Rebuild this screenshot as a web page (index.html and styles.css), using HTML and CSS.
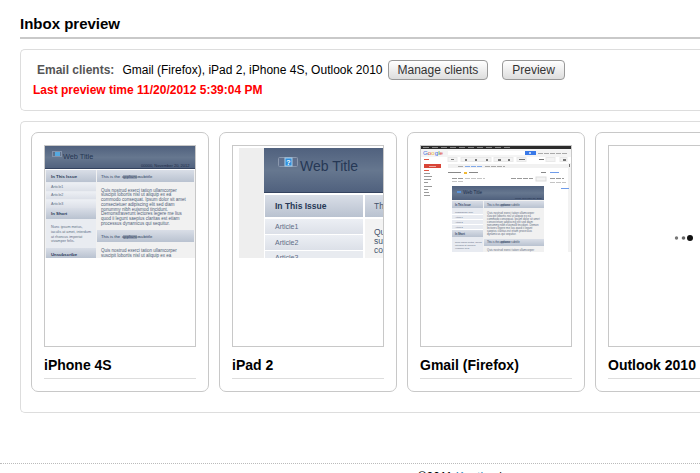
FILE: index.html
```html
<!DOCTYPE html>
<html lang="en">
<head>
<meta charset="utf-8">
<title>Inbox preview</title>
<link rel="stylesheet" href="styles.css">
</head>
<body>
<svg class="defs" aria-hidden="true">
  <defs>
    <linearGradient id="banner" x1="0" y1="0" x2="0" y2="1"><stop offset="0" stop-color="#50617e"/><stop offset=".5" stop-color="#66778f"/><stop offset="1" stop-color="#4f607d"/></linearGradient>
    <linearGradient id="bar" x1="0" y1="0" x2="0" y2="1"><stop offset="0" stop-color="#d9dee7"/><stop offset="1" stop-color="#b9c2d0"/></linearGradient>
    <linearGradient id="item" x1="0" y1="0" x2="0" y2="1"><stop offset="0" stop-color="#eceff4"/><stop offset="1" stop-color="#dce0e8"/></linearGradient>
  </defs>
</svg>
<main class="page">
  <h1>Inbox preview</h1>
  <section class="panel clients">
    <div class="clients-row">
      <span class="label">Email clients:</span>
      <span class="names">Gmail (Firefox), iPad 2, iPhone 4S, Outlook 2010</span>
      <button type="button">Manage clients</button>
      <button type="button" class="preview">Preview</button>
    </div>
    <p class="status">Last preview time 11/20/2012 5:39:04 PM</p>
  </section>
  <section class="panel cards">
    <article class="card">
      <div class="frame">
        <svg class="thumb" viewBox="0 0 150 200" role="img" aria-label="iPhone 4S preview">
          <rect y="0" width="150" height="112" fill="#f1f1f1"/>
          <rect width="150" height="23" fill="url(#banner)"/>
          <rect y="22" width="150" height="1" fill="#34435f"/>
          <rect y="23" width="150" height="1" fill="#fff"/>
          <rect x="7.500" y="5.500" width="9" height="5" fill="none" stroke="#8492aa"/>
          <rect x="10" y="6" width="5" height="4" fill="#55a9e0"/>
          <text x="18" y="13" font-size="7.300" fill="#243653">Web Title</text>
          <text x="96" y="21" font-size="4" fill="#1d2c47">00000, November 20, 2012</text>
          <rect x="1" y="24" width="50" height="88" fill="#e9ecf1"/>
          <rect x="1" y="24" width="50" height="12" fill="url(#bar)"/>
          <rect x="52" y="24" width="97" height="12" fill="url(#bar)"/>
          <rect x="1" y="37" width="50" height="8" fill="url(#item)"/>
          <rect x="1" y="46" width="50" height="7" fill="url(#item)"/>
          <rect x="1" y="54" width="50" height="8" fill="url(#item)"/>
          <rect x="1" y="62" width="50" height="11" fill="url(#bar)"/>
          <rect x="1" y="102" width="50" height="10" fill="url(#bar)"/>
          <rect x="52" y="84" width="97" height="12" fill="url(#bar)"/>
          <g font-size="4.300" font-weight="700" fill="#283a58">
            <text x="6" y="32">In This Issue</text><text x="6" y="69">In Short</text><text x="6" y="110">Unsubscribe</text>
          </g>
          <g font-size="3.700" fill="#5f6d85">
            <text x="6" y="42">Article1</text><text x="6" y="50">Article2</text><text x="6" y="59">Article3</text>
            <text x="6" y="82">Nunc ipsum metus,</text><text x="6" y="87">iaculis at amet, interdum</text><text x="6" y="92">at rhoncus imperiat</text><text x="6" y="96">vivamper felis.</text>
          </g>
          <g font-size="4.200" fill="#2d3f5d">
            <rect x="78" y="29" width="14" height="4" fill="#98a3b5"/><rect x="78" y="89" width="14" height="4" fill="#98a3b5"/>
            <text x="56" y="32">This is the</text><text x="56" y="92">This is the</text><text x="77" y="32">appliance</text><text x="77" y="92">appliance</text><text x="94" y="32">subtitle</text><text x="94" y="92">subtitle</text>
          </g>
          <g font-size="4.500" fill="#4e5d77">
            <text x="56" y="46">Quis nostrud exerci tation ullamcorper</text><text x="56" y="50">suscipit lobortis nisl ut aliquip ex ea</text><text x="56" y="55">commodo consequat. Ipsum dolor sit amet</text><text x="56" y="60">consectetuer adipiscing elit sed diam</text><text x="56" y="65">nonummy nibh euismod tincidunt.</text><text x="56" y="69">Demonstraverunt lectores legere me lius</text><text x="56" y="74">quod ii legunt saepius claritas est etiam</text><text x="56" y="79">processus dynamicus qui sequitur.</text><text x="56" y="106">Quis nostrud exerci tation ullamcorper</text><text x="56" y="111">suscipit lobortis nisl ut aliquip ex ea</text>
          </g>
          <rect y="112" width="150" height="4" fill="#fff"/>
        </svg>
      </div>
      <h2>iPhone 4S</h2>
    </article>
    <article class="card">
      <div class="frame">
        <svg class="thumb" viewBox="0 0 150 200" role="img" aria-label="iPad 2 preview">
          <svg x="6" y="2" width="144" height="110" viewBox="6 2 144 110">
            <rect x="6" y="2" width="144" height="110" fill="#eee"/>
            <rect x="31" y="2" width="119" height="110" fill="#fff"/>
            <rect x="31" y="2" width="119" height="45" fill="url(#banner)"/>
            <rect x="31" y="46" width="119" height="1" fill="#34435f"/>
            <rect x="46" y="11" width="19" height="10" fill="#60708d"/>
            <rect x="45.500" y="11.500" width="19" height="9" rx="1" fill="none" stroke="#8b98ad"/>
            <rect x="52" y="12" width="7" height="8" fill="#2f8fdc" stroke="#a9cfec"/>
            <text x="55.500" y="18.500" text-anchor="middle" font-size="7" font-weight="700" fill="#fff">?</text>
            <text x="67" y="25" font-size="14" fill="#263855">Web Title</text>
            <rect x="32" y="49" width="98" height="22" fill="url(#bar)"/>
            <rect x="132" y="49" width="18" height="22" fill="url(#bar)"/>
            <rect x="32" y="73" width="98" height="15" fill="url(#item)"/>
            <rect x="32" y="89" width="98" height="15" fill="url(#item)"/>
            <rect x="32" y="105" width="98" height="7" fill="#e8ebf0"/>
            <rect x="132" y="73" width="18" height="39" fill="#f3f3f3"/>
            <text x="42" y="63" font-size="8.500" font-weight="700" fill="#263855">In This Issue</text>
            <g font-size="7" fill="#5d6c86"><text x="42" y="83">Article1</text><text x="42" y="99">Article2</text><text x="42" y="114">Article3</text></g>
            <g font-size="8.500" fill="#45546d"><text x="141" y="63">Th</text><text x="141" y="89">Qu</text><text x="141" y="98">su</text><text x="141" y="107">co</text></g>
          </svg>
        </svg>
      </div>
      <h2>iPad 2</h2>
    </article>
    <article class="card">
      <div class="frame">
        <svg class="thumb" viewBox="0 0 150 200" role="img" aria-label="Gmail (Firefox) preview">
          <rect width="150" height="3" fill="#2c2c2c"/>
          <path d="M2 1.500h87" stroke="#888" stroke-dasharray="6 3"/>
          <rect y="3" width="150" height="8" fill="#f4f4f4"/>
          <rect x="27" y="5" width="77" height="4" fill="#fff"/>
          <text x="2" y="9" font-size="6.200"><tspan fill="#3c6fe0">G</tspan><tspan fill="#db4738">o</tspan><tspan fill="#edb82f">o</tspan><tspan fill="#3c6fe0">g</tspan><tspan fill="#3d9c4b">l</tspan><tspan fill="#db4738">e</tspan></text>
          <rect x="104" y="5" width="11" height="4" fill="#3979e8"/><rect x="108" y="6" width="2" height="2" fill="#b6d0fb"/>
          <path d="M117 7.500h30" stroke="#aaa" stroke-dasharray="5 1"/>
          <path d="M3 13.500h5" stroke="#e05443"/>
          <g fill="#f3f3f3" stroke="#e9e9e9"><rect x="27" y="11.500" width="9" height="4"/><rect x="40" y="11.500" width="30" height="4"/><rect x="73" y="11.500" width="19" height="4"/><rect x="96" y="11.500" width="9" height="4"/><rect x="125" y="11.500" width="9" height="4"/><rect x="139" y="11.500" width="7" height="4"/></g>
          <g fill="#777"><rect x="30" y="13" width="3" height="1"/><rect x="44" y="13" width="2" height="2"/><rect x="54" y="13" width="2" height="2"/><rect x="65" y="13" width="2" height="2"/><rect x="77" y="13" width="3" height="2"/><rect x="87" y="13" width="2" height="2"/><rect x="98" y="13" width="6" height="1"/><rect x="118" y="13" width="5" height="1"/><rect x="142" y="13" width="3" height="2"/></g>
          <rect x="3" y="18" width="17" height="4" fill="#d84537"/><rect x="8" y="20" width="7" height="1" fill="#eeaaa4"/>
          <rect x="27" y="18" width="120" height="4" fill="#f1f1f1"/>
          <path d="M37 20.500h6M64 20.500h20" stroke="#aaa" stroke-dasharray="5 1"/><path d="M44 20.500h18" stroke="#82a9e9" stroke-dasharray="5 1"/>
          <rect x="147" y="17" width="3" height="89" fill="#f2f2f2"/><rect x="148" y="18" width="1" height="3" fill="#777"/>
          <path d="M3 24.500h5" stroke="#e05443"/>
          <path d="M3 27.500h6M3 30.500h8M3 33.500h7M3 36.500h4M3 40.500h8M3 43.500h4M3 46.500h5M3 49.500h6" stroke="#999"/>
          <path d="M27 26.500h13M48 26.500h9M120 26.500h5" stroke="#888"/><rect x="43" y="26" width="3" height="2" fill="#f1b934"/>
          <path d="M129 26.500h9M140 42.500h8" stroke="#6f9cea"/>
          <path d="M31 32.500h12M90 32.500h22M129 32.500h14" stroke="#999" stroke-dasharray="5 1"/><path d="M44 32.500h20M31 35.500h12M129 36.500h16" stroke="#c4c4c4" stroke-dasharray="5 1"/>
          <rect x="115" y="31" width="10" height="4" fill="#f3f3f3" stroke="#ddd"/>
          <rect x="31" y="40" width="92" height="66" fill="#f1f1f1"/>
          <rect x="31" y="40" width="92" height="14" fill="url(#banner)"/>
          <rect x="36" y="45" width="4" height="2" fill="#5a95dd"/>
          <text x="42" y="48" font-size="4.600" fill="#1e2e4b">Web Title</text>
          <text x="94" y="53" font-size="2.200" fill="#1d2c47">00000, November 20, 2012</text>
          <rect x="31" y="55" width="31" height="51" fill="#e8ebf1"/>
          <rect x="31" y="55" width="31" height="7" fill="url(#bar)"/><rect x="63" y="55" width="60" height="7" fill="url(#bar)"/>
          <rect x="31" y="84" width="31" height="7" fill="url(#bar)"/><rect x="63" y="93" width="60" height="7" fill="url(#bar)"/>
          <path d="M31 68.500h31M31 73.500h31M31 78.500h31M31 83.500h31" stroke="#fff"/>
          <rect x="80" y="58" width="9" height="2" fill="#98a3b5"/><rect x="80" y="95" width="9" height="2" fill="#98a3b5"/>
          <g font-size="2.600" fill="#30415e"><text x="34" y="60" font-weight="700">In This Issue</text><text x="34" y="89" font-weight="700">In Short</text><text x="66" y="60">This is the appliance subtitle</text><text x="66" y="97">This is the appliance subtitle</text></g>
          <g font-size="2.300" fill="#5c6980"><text x="34" y="67">Unsubscribe here</text><text x="34" y="72">Article1</text><text x="34" y="77">Article2</text><text x="34" y="82">Article3</text><text x="34" y="97">Nunc ipsum metus, iaculis</text><text x="34" y="100">interdum at rhoncus</text><text x="34" y="103">vivamper felis.</text></g>
          <g font-size="2.800" fill="#5c6980"><text x="66" y="68">Quis nostrud exerci tation ullamcorper</text><text x="66" y="71">suscipit lobortis nisl ut aliquip ex ea</text><text x="66" y="74">commodo consequat. Ipsum dolor sit amet</text><text x="66" y="77">consectetuer adipiscing elit sed diam</text><text x="66" y="80">nonummy nibh euismod tincidunt. Demon</text><text x="66" y="83">lectores legere me lius quod ii legunt</text><text x="66" y="86">saepius claritas est etiam processus</text><text x="66" y="89">dynamicus qui sequitur.</text><text x="66" y="105">Quis nostrud exerci tation ullamcorper</text></g>
        </svg>
      </div>
      <h2>Gmail (Firefox)</h2>
    </article>
    <article class="card">
      <div class="frame">
        <svg class="thumb" viewBox="0 0 150 200" role="img" aria-label="Loading Outlook 2010 preview"><circle cx="67.500" cy="92" r="1.700" fill="#777"/><circle cx="74.500" cy="92" r="1.800" fill="#666"/><circle cx="81" cy="92" r="3" fill="#111"/></svg>
      </div>
      <h2>Outlook 2010</h2>
    </article>
  </section>
</main>
<footer>©2011 <a href="#">Kentico</a> |</footer>
</body>
</html>
```
FILE: styles.css
```css
* { box-sizing: border-box; }
html { overflow: hidden; }
body { margin: 0; background: #fff; color: #000; font: 12px/16px "Liberation Sans", Arial, sans-serif; }
.defs { position: absolute; width: 0; height: 0; }
.page { padding: 14px 0 0 20px; }
h1 { margin: 0; padding-bottom: 3px; border-bottom: 2px solid #c9c9c9; font-size: 15px; line-height: 20px; }
.panel { border: 1px solid #ddd; border-right: 0; border-radius: 5px 0 0 5px; margin-top: 10px; }
.clients { padding: 10px 12px 12px; }
.clients-row { display: flex; align-items: center; height: 20px; white-space: nowrap; }
.label { margin: 0 8px 0 4px; color: #555; font-weight: 700; }
.names { margin-right: 5px; }
button { height: 20px; padding: 0 9px; border: 1px solid #999; border-radius: 4px; background: linear-gradient(#fff, #ddd); color: #333; font: inherit; }
.preview { margin-left: 14px; }
.status { margin: 2px 0 0; color: #f00; font-weight: 700; }
.cards { display: flex; gap: 10px; padding: 10px 10px 20px; overflow: hidden; }
.card { flex: none; padding: 12px; border: 1px solid #c8c8c8; border-radius: 7px; }
.frame { width: 152px; border: 1px solid #c8c8c8; }
.thumb { display: block; width: 150px; height: 200px; font-family: "Liberation Sans", Arial, sans-serif; }
h2 { margin: 8px 0 0; padding-bottom: 3px; border-bottom: 1px solid #ddd; font-size: 14px; line-height: 20px; }
footer { margin-top: 50px; padding: 5px 0 0 220px; border-top: 1px dotted #bbb; text-align: center; }
footer a { color: #1e7fb8; text-decoration: none; }
```
